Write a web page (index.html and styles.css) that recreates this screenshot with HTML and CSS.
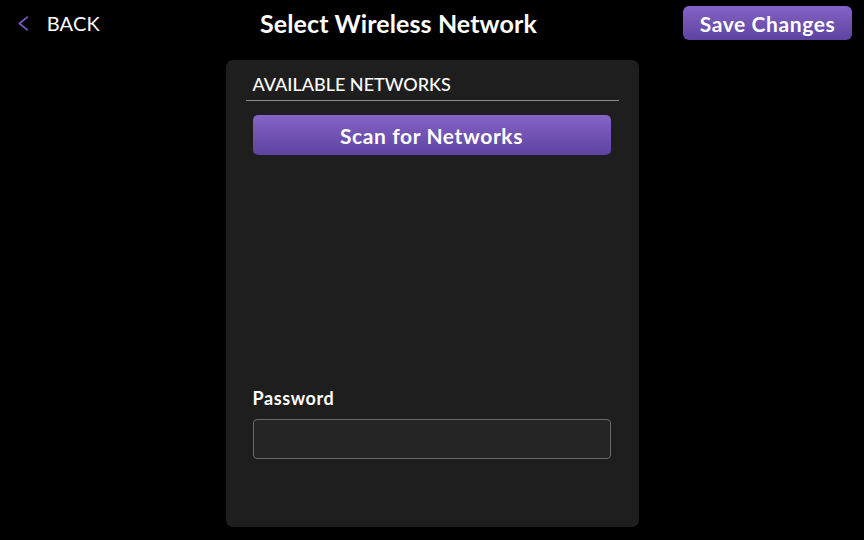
FILE: index.html
```html
<!DOCTYPE html>
<html lang="en">
<head>
<meta charset="utf-8">
<title>Select Wireless Network</title>
<link rel="stylesheet" href="styles.css">
</head>
<body>
<header class="topbar">
  <a class="back" href="#">
    <svg class="chev" width="11" height="15" viewBox="0 0 11 15" aria-hidden="true"><path d="M9.5 1 L1.5 7.5 L9.5 14" fill="none" stroke="#7b58c4" stroke-width="1.8" stroke-linecap="round" stroke-linejoin="round"/></svg>
    <span class="back-text">BACK</span>
  </a>
  <h1 class="title">Select Wireless Network</h1>
  <button class="btn save">Save Changes</button>
</header>
<main class="panel">
  <div class="section-head">AVAILABLE NETWORKS</div>
  <button class="btn scan">Scan for Networks</button>
  <div class="network-list"></div>
  <label class="field-label" for="pw">Password</label>
  <input class="field" id="pw" type="password">
</main>
</body>
</html>
```
FILE: styles.css
```css
* { box-sizing: border-box; }
html, body { margin: 0; padding: 0; background: #000; }
body {
  width: 864px;
  height: 540px;
  overflow: hidden;
  font-family: Lato, "Open Sans", "Liberation Sans", sans-serif;
  color: #fff;
}
.topbar {
  display: flex;
  align-items: center;
  height: 40px;
  padding: 6px 12px 0 18px;
}
.back {
  display: flex;
  align-items: center;
  text-decoration: none;
  color: #fff;
  width: 82px;
}
.chev { display: block; margin-top: 1px; }
.back-text {
  margin-left: 18px;
  font-size: 20px;
  letter-spacing: 0.2px;
  line-height: 24px;
}
.title {
  margin: 0 0 0 160px;
  font-size: 25px;
  font-weight: 700;
  letter-spacing: 0.1px;
  line-height: 28px;
}
.btn {
  font-family: inherit;
  color: #fff;
  border: none;
  font-weight: 700;
  background: linear-gradient(#8563c7, #5d439f);
  cursor: pointer;
}
.save {
  margin-left: auto;
  width: 169px;
  height: 34px;
  border-radius: 6px;
  font-size: 21px;
  letter-spacing: 0.6px;
  padding: 0;
}
.panel {
  width: 413px;
  height: 467px;
  margin: 20px auto 0;
  background: #1e1e1e;
  border-radius: 7px;
  padding: 14px 20px 0;
  display: flex;
  flex-direction: column;
}
.section-head {
  font-size: 18px;
  font-weight: 500;
  line-height: 20px;
  padding: 0 7px 6px;
  border-bottom: 1px solid #8a8a8a;
}
.scan {
  margin: 14px 8px 0 7px;
  height: 40px;
  border-radius: 5px;
  font-size: 21px;
  letter-spacing: 0.6px;
}
.network-list {
  height: 232px;
}
.field-label {
  display: block;
  margin: 0 7px;
  font-size: 18px;
  font-weight: 700;
  letter-spacing: 0.6px;
  line-height: 22px;
}
.field {
  margin: 10px 8px 0 7px;
  height: 40px;
  background: #252525;
  border: 1px solid #6a6a6a;
  border-radius: 4px;
  color: #fff;
  font-family: inherit;
  font-size: 16px;
  padding: 0 10px;
  outline: none;
}
```
